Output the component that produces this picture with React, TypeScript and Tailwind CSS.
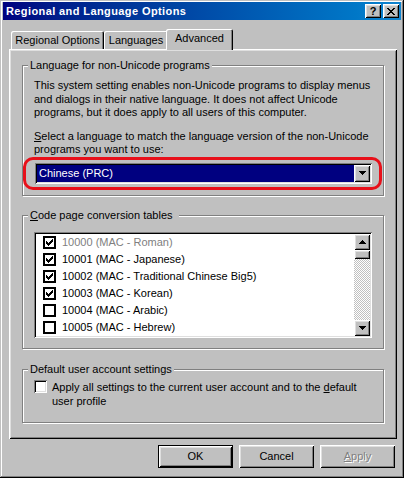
const FACE = "bg-[#c0c0c0]";
const RAISED =
  "shadow-[inset_1px_1px_0_#fff,inset_-1px_-1px_0_#000,inset_2px_2px_0_#dfdfdf,inset_-2px_-2px_0_#808080]";
const SUNKEN =
  "shadow-[inset_1px_1px_0_#808080,inset_-1px_-1px_0_#fff,inset_2px_2px_0_#000,inset_-2px_-2px_0_#dfdfdf]";
const GROUP =
  "m-0 p-0 border border-[#808080] shadow-[inset_1px_1px_0_#fff,1px_1px_0_#fff]";

const CODE_PAGES = [
  { id: "10000 (MAC - Roman)", checked: true, disabled: true },
  { id: "10001 (MAC - Japanese)", checked: true },
  { id: "10002 (MAC - Traditional Chinese Big5)", checked: true },
  { id: "10003 (MAC - Korean)", checked: true },
  { id: "10004 (MAC - Arabic)", checked: false },
  { id: "10005 (MAC - Hebrew)", checked: false },
];

/** Classic 7x7 pixel check mark */
function CheckGlyph() {
  const cols = [2, 3, 4, 3, 2, 1, 0];
  return (
    <svg width="7" height="7" viewBox="0 0 7 7" shapeRendering="crispEdges">
      {cols.map((y, x) => (
        <rect key={x} x={x} y={y} width="1" height="3" fill="#000" />
      ))}
    </svg>
  );
}

function Arrow({ dir }: { dir: "up" | "down" }) {
  const rows = dir === "down" ? [7, 5, 3, 1] : [1, 3, 5, 7];
  return (
    <svg width="7" height="4" viewBox="0 0 7 4" shapeRendering="crispEdges">
      {rows.map((w, y) => (
        <rect key={y} x={(7 - w) / 2} y={y} width={w} height="1" fill="#000" />
      ))}
    </svg>
  );
}

function CloseGlyph() {
  // 8x7 pixel "x" from the caption button
  const rows = [
    [0, 1, 6, 7],
    [1, 2, 5, 6],
    [2, 3, 4, 5],
    [3, 4],
    [2, 3, 4, 5],
    [1, 2, 5, 6],
    [0, 1, 6, 7],
  ];
  return (
    <svg width="8" height="7" viewBox="0 0 8 7" shapeRendering="crispEdges">
      {rows.flatMap((xs, y) =>
        xs.map((x) => <rect key={`${x}-${y}`} x={x} y={y} width="1" height="1" fill="#000" />)
      )}
    </svg>
  );
}

function Tab({ label, width, active }: { label: string; width: string; active?: boolean }) {
  return (
    <div
      className={
        "flex justify-center rounded-t-[2px] shadow-[inset_1px_1px_0_#fff,inset_-1px_0_0_#000,inset_-2px_0_0_#808080] " +
        FACE +
        " " +
        width +
        (active
          ? " relative z-10 -ml-[2px] -mb-[1px] h-[21px] pt-[3px]"
          : " h-[18px] pt-[3px]")
      }
    >
      {label}
    </div>
  );
}

function Button({ children, isDefault, disabled }: { children: React.ReactNode; isDefault?: boolean; disabled?: boolean }) {
  return (
    <button
      className={
        "w-[75px] h-[23px] flex items-center justify-center " +
        FACE +
        " " +
        (isDefault ? "border border-black " : "") +
        RAISED +
        (disabled ? " text-[#808080] [text-shadow:1px_1px_0_#fff]" : "")
      }
    >
      {children}
    </button>
  );
}

export default function App() {
  return (
    <div
      className={
        "w-[404px] h-[478px] pt-[2px] px-[3px] flex flex-col text-[11px] leading-[13px] text-black font-['Liberation_Sans',Arial,sans-serif] " +
        FACE +
        " shadow-[inset_-1px_-1px_0_#000,inset_1px_1px_0_#c0c0c0,inset_-2px_-2px_0_#808080,inset_2px_2px_0_#fff]"
      }
    >
      {/* Caption */}
      <div className="h-[18px] flex items-center justify-between pl-[3px] pr-[2px] bg-gradient-to-r from-[#000080] to-[#1084d0]">
        <span className="text-white font-bold text-[11px] tracking-[0.4px]">Regional and Language Options</span>
        <div className="flex gap-[2px]">
          <div className={"w-[16px] h-[14px] flex items-center justify-center font-bold text-[11px] leading-none " + FACE + " " + RAISED}>
            ?
          </div>
          <div className={"w-[16px] h-[14px] flex items-center justify-center " + FACE + " " + RAISED}>
            <CloseGlyph />
          </div>
        </div>
      </div>

      {/* Tabs */}
      <div className="mt-[9px] pl-[8px] h-[20px] flex items-end">
        <Tab label="Regional Options" width="w-[93px]" />
        <Tab label="Languages" width="w-[64px]" />
        <Tab label="Advanced" width="w-[67px]" active />
      </div>

      {/* Tab page */}
      <div className={"ml-[6px] w-[388px] h-[390px] px-[13px] pt-[10px] " + RAISED}>
        <fieldset className={"h-[137px] " + GROUP}>
          <legend className={"ml-[5px] px-[2px] " + FACE}>Language for non-Unicode programs</legend>
          <p className="mt-[7px] ml-[11px] leading-[13.5px]">
            This system setting enables non-Unicode programs to display menus
            <br />
            and dialogs in their native language. It does not affect Unicode
            <br />
            programs, but it does apply to all users of this computer.
          </p>
          <p className="mt-[10px] ml-[11px] leading-[13.5px]">
            <u>S</u>elect a language to match the language version of the non-Unicode
            <br />
            programs you want to use:
          </p>
          <div className="h-[33px] mr-[1px] border-[3px] border-[#e8101a] rounded-[10px] pt-[3px] pl-[9px]">
            <div className={"flex w-[337px] h-[21px] p-[2px] bg-white " + SUNKEN}>
              <div className="flex-1 bg-[#000080] text-white pl-[2px] leading-[17px]">Chinese (PRC)</div>
              <div className={"w-[16px] h-[17px] flex items-center justify-center " + FACE + " " + RAISED}>
                <Arrow dir="down" />
              </div>
            </div>
          </div>
        </fieldset>

        <fieldset className={"mt-[13px] h-[140px] " + GROUP}>
          <legend className={"ml-[5px] pl-[2px] pr-[6px] " + FACE}>
            <u>C</u>ode page conversion tables
          </legend>
          <div className={"mt-[10px] ml-[11px] w-[338px] h-[106px] p-[2px] flex bg-white " + SUNKEN}>
            <div className="flex-1 flex flex-col">
              {CODE_PAGES.map((cp) => (
                <div key={cp.id} className="h-[17px] flex items-center pl-[7px] gap-[6px]">
                  <div className="w-[13px] h-[13px] border-2 border-black bg-white flex items-center justify-center">
                    {cp.checked && <CheckGlyph />}
                  </div>
                  <span className={cp.disabled ? "text-[#808080]" : ""}>{cp.id}</span>
                </div>
              ))}
            </div>
            {/* Scrollbar */}
            <div className="w-[16px] flex flex-col">
              <div className={"h-[16px] flex items-center justify-center " + FACE + " " + RAISED}>
                <Arrow dir="up" />
              </div>
              <div className={"h-[9px] " + FACE + " " + RAISED} />
              <div className="flex-1 bg-[image:repeating-conic-gradient(#c0c0c0_0%_25%,#ffffff_0%_50%)] bg-[length:2px_2px]" />
              <div className={"h-[16px] flex items-center justify-center " + FACE + " " + RAISED}>
                <Arrow dir="down" />
              </div>
            </div>
          </div>
        </fieldset>

        <fieldset className={"mt-[14px] h-[60px] " + GROUP}>
          <legend className={"ml-[5px] px-[2px] " + FACE}>Default user account settings</legend>
          <div className="mt-[4px] ml-[11px] flex items-start gap-[5px]">
            <div className={"w-[13px] h-[13px] shrink-0 bg-white " + SUNKEN} />
            <p className="leading-[14px]">
              Apply all settings to the current user account and to the <u>d</u>efault
              <br />
              user profile
            </p>
          </div>
        </fieldset>
      </div>

      {/* Dialog buttons */}
      <div className="mt-[6px] pr-[6px] flex justify-end gap-[6px]">
        <Button isDefault>OK</Button>
        <Button>Cancel</Button>
        <Button disabled>
          <span>
            <u>A</u>pply
          </span>
        </Button>
      </div>
    </div>
  );
}
